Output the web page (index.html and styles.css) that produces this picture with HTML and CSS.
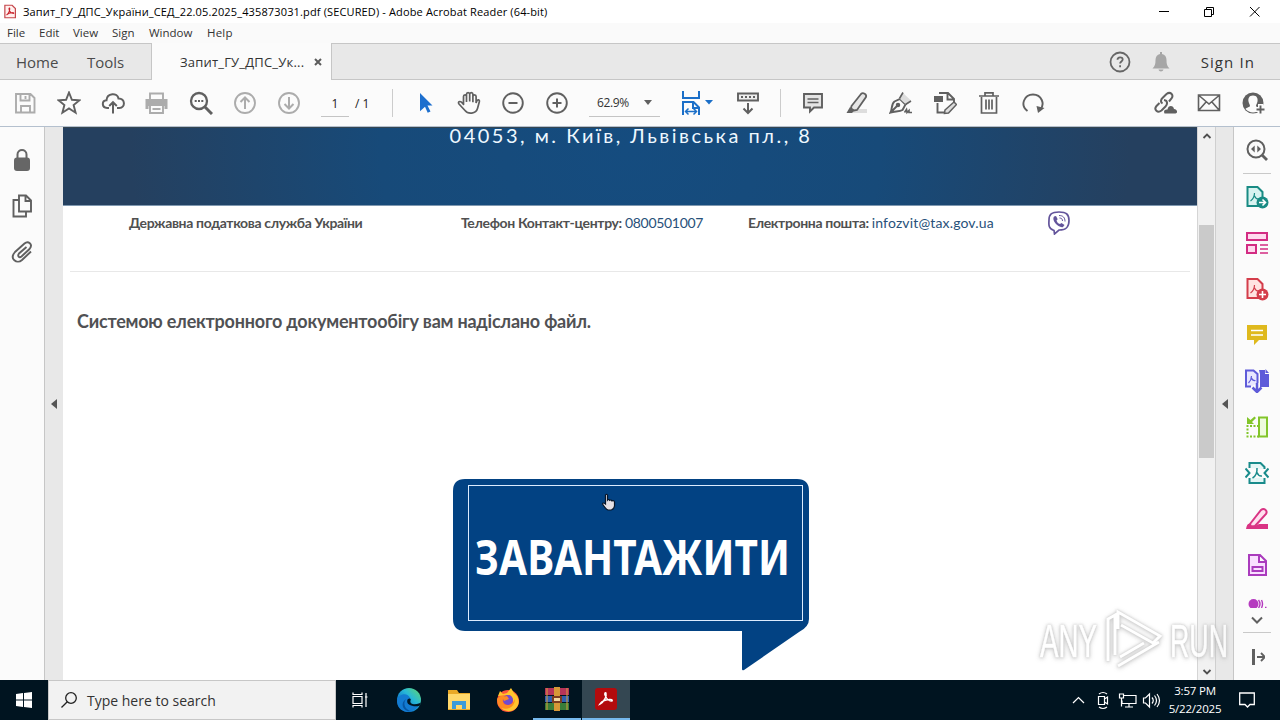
FILE: index.html
```html
<!DOCTYPE html>
<html lang="uk">
  <head>
    <meta charset="UTF-8" />
    <meta name="viewport" content="width=device-width, initial-scale=1.0" />
    <title>Adobe Acrobat Reader (64-bit)</title>
    <link rel="stylesheet" href="styles.css">
  </head>
  <body>
    <!-- Title bar -->
    <header class="title-bar">
      <svg class="app-icon" viewBox="0 0 14 16"><path d="M1 .7h8.500l3.800 3.800v10.800H1z" fill="#fff0ee" stroke="#c5464b" stroke-width="1.400"/><path d="M3 12c2-1 4-5 3.700-7.500-.2-1.300-1.300-.4-.7 1.200C6.700 8 9 10 11 10.200c1 0 .5-1.100-1-1-2.400.1-5.400.9-7 2.800z" fill="none" stroke="#c8202a" stroke-width="1.200"/></svg>
      <span class="title-text">Запит_ГУ_ДПС_України_СЕД_22.05.2025_435873031.pdf (SECURED) - Adobe Acrobat Reader (64-bit)</span>
      <svg class="window-buttons" viewBox="0 0 112 22" fill="none" stroke="#000"><path d="M7 10.500h10M52.500 8.500h7v7h-7zM54.500 8.500v-2h7v7h-2M98 6l9.500 9.500M107.500 6L98 15.500"/></svg>
    </header>

    <nav class="menu-bar">
      <span class="m-file">File</span><span class="m-edit">Edit</span><span class="m-view">View</span><span class="m-sign">Sign</span><span class="m-window">Window</span><span class="m-help">Help</span>
    </nav>

    <!-- Tabs -->
    <div class="tab-bar">
      <span class="home">Home</span>
      <span class="tools">Tools</span>
      <div class="doc-tab">
        <span class="doc-name">Запит_ГУ_ДПС_Ук...</span>
        <svg width="8" height="8" viewBox="0 0 8 8" stroke="#5c5c5c" stroke-width="2"><path d="M1 1l6 6M7 1L1 7"/></svg>
      </div>
      <div class="account">
        <svg width="22" height="22" viewBox="0 0 22 22" fill="none" stroke="#666" stroke-width="1.800"><circle cx="11" cy="11" r="9.500"/><path d="M8.500 8.800c0-3.300 5.200-3.300 5.200-.3 0 1.900-2.600 2-2.600 4M11.100 14.300v2"/></svg>
        <svg width="18" height="22" viewBox="0 0 18 22" fill="#a6a6a6"><path d="M8 1h2v2c3 .6 4.500 3 4.500 6 0 4 .5 6 3 8.500H.5C3 15 3.500 13 3.500 9c0-3 1.500-5.400 4.500-6zM6.500 18.500h5c-.5 2.500-4.500 2.500-5 0z"/></svg>
        <span class="sign-in">Sign In</span>
      </div>
    </div>

    <!-- Toolbar -->
    <div class="toolbar">
      <svg class="icon dim" viewBox="0 0 24 24"><path d="M3 3h14.500L21.500 7v14.500H3zM7.500 3v6.500h9V3M12.500 5v3M8 21.500v-6.500h9v6.500"/></svg>
      <svg class="icon" viewBox="0 0 24 24"><path d="M12 1.500l2.900 7.300 7.600.5-5.900 4.800 2 7.600L12 17.500l-6.600 4.200 2-7.600-5.900-4.800 7.600-.5z"/></svg>
      <svg class="icon" viewBox="0 0 24 24"><path d="M8 17H6.200C.5 16.500.5 9.700 5.500 9.300 6 1.500 16.500 1.500 17.500 7.500c6.800-.2 7.300 9 .8 9.500H16M12 22.500V11.500M8.200 15l3.800-3.800 3.800 3.800" stroke-width="2"/></svg>
      <svg class="icon dim" viewBox="0 0 24 24"><path d="M5 8V2.500h13V8"/><path d="M.5 8h22v10h-3v-3h-16v3h-3z" fill="#acacac" stroke="none"/><path d="M5 15v7h13v-7M7.500 18h8"/></svg>
      <svg class="icon" viewBox="0 0 24 24"><circle cx="10" cy="10" r="8" stroke-width="2.300"/><path d="M16 16l7 7" stroke-width="3"/><path d="M5.700 9h2v2h-2zM9 9h2v2H9zM12.300 9h2v2h-2z" fill="#606060" stroke="none"/></svg>
      <svg class="icon dim" viewBox="0 0 24 24"><circle cx="12" cy="12" r="10"/><path d="M12 18V6.500M7.500 11L12 6.500l4.500 4.500" stroke-width="2"/></svg>
      <svg class="icon dim" viewBox="0 0 24 24"><circle cx="12" cy="12" r="10"/><path d="M12 6v11.500M7.500 13l4.500 4.500 4.500-4.500" stroke-width="2"/></svg>
      <div class="page-no"><span class="current">1</span><span>/ 1</span></div>
      <i class="divider first"></i>
      <svg class="icon" viewBox="0 0 24 24"><path d="M7 2l12.500 12.500h-5l3 6-2.800 1.300-2.700-6-5 4.500z" fill="#1d6fce" stroke="none"/></svg>
      <svg class="icon" viewBox="0 0 24 24"><path d="M6.500 14V6c0-2.200 3-2.200 3 0v5.500V3.700c0-2.200 3.200-2.200 3.200 0v7.300V3.700c0-2.200 3.200-2.200 3.200 0v8V6c0-2.200 3.200-2.200 3.200 0v6.500l.7-2c.9-2 3-1.200 2.600.6L20.500 18c-1.500 5.500-9.500 6-12.500 2L2 13.500c-1.500-2 .7-3.300 2.500-1.800l2.500 2.600" transform="translate(0 -.5)" stroke-width="1.700"/></svg>
      <svg class="icon" viewBox="0 0 24 24"><circle cx="12" cy="12" r="9.800"/><path d="M7.500 12h9" stroke-width="2"/></svg>
      <svg class="icon" viewBox="0 0 24 24"><circle cx="12" cy="12" r="9.800"/><path d="M7.500 12h9M12 7.500v9" stroke-width="2"/></svg>
      <div class="zoom-level"><span>62.9%</span><i class="caret"></i></div>
      <svg class="fit-icon" viewBox="0 0 32 26" fill="none" stroke="#1b6fc8" stroke-width="2"><path d="M2 1v7h16V1M2 25V12h10.500l5.500 5.500V25M12 12v6h6"/><path d="M4.500 21.500h11M7.500 18.500l-3 3 3 3M12.500 18.500l3 3-3 3" stroke-width="1.500"/><path d="M24 10h8l-4 4.500z" fill="#1b6fc8" stroke="none"/></svg>
      <svg class="icon keyboard" viewBox="0 0 24 24"><path d="M2 2.500h20v7H2z" fill="#eee"/><path d="M5 6h2M9 6h2M13 6h2M17 6h2M12 12v10M7.500 17.500L12 22l4.500-4.500" stroke-width="2"/></svg>
      <i class="divider second"></i>
      <svg class="icon" viewBox="0 0 24 24"><path d="M3 3h18v13.500h-8l-4 4v-4H3z" fill="#e4e4e4"/><path d="M6.500 8h11M6.500 11.500h11" stroke-width="1.300"/></svg>
      <svg class="icon" viewBox="0 0 24 24"><path d="M9 18h13v4H7z" fill="#ddd" stroke="none"/><path d="M6.500 15L16 3c2-2 6 .2 5 3l-9 13-3 .5-3-2z" fill="#e5e5e5" stroke-width="1.800"/><path d="M5 16l4.500 3.500L7 22H1.500z" fill="#606060" stroke="none"/></svg>
      <svg class="icon" viewBox="0 0 24 24"><path d="M1.500 21.500C3.500 18 2 13 5.500 10.500L11 8l5.500 5.500-3 5.500c-3 2-8 1-12 2.500zM2 21l6-6"/><path d="M10.500 7.500l3.500-5.500 8 7.500-5 4" fill="#ddd" stroke="none"/><path d="M10.500 7.500L14 1.500M16.500 13.500L22 10M15.500 21.500l2-3 .5 3 2-2v2h3" stroke-width="1.600"/><circle cx="9" cy="14" r="1.300" fill="#606060"/></svg>
      <svg class="icon" viewBox="0 0 24 24"><path d="M6 2h9l6 6v3M14.500 2v6.500H21M4.500 12v9.500H11" stroke-width="1.900"/><path d="M1 5h9v6H1z" fill="#606060" stroke="none"/><path d="M12 19l9-8 2.500 2.500-8 8.500-4 .5z" fill="#ddd" stroke-width="1.500"/></svg>
      <svg class="icon" viewBox="0 0 24 24"><path d="M2 5h20M8 4.500V1.800h8v2.700M4.500 6v16h15V6M9 8.500v10M12 8.500v10M15 8.500v10" stroke-width="1.700"/></svg>
      <svg class="icon" viewBox="0 0 24 24"><path d="M6.500 20C-1.500 14 3.500 3.500 12 3.500c8.500 0 12.500 9.500 7 15.500"/><path d="M15.500 15l8 2-6.500 5z" fill="#606060" stroke="none"/></svg>
      <div class="share-tools">
        <svg class="icon" viewBox="0 0 24 24"><path d="M9.500 12.500c-2.500-1.500-1.500-4 0-5.500l4-4c4-3 7.500 1 5 4.500l-2.500 3M11 9c4 .5 3.500 4.500 1.500 6.500l-4 4c-4 3-8-1-5-4.500l3-3" stroke-width="2"/><path d="M11.500 22.500c-1.500-3 1-4.500 3-4 .5-4.500 6-4.500 6.500-.5 3.500 0 4 4.500 1.500 4.500z" fill="#606060" stroke="none"/></svg>
        <svg class="icon" viewBox="0 0 24 24"><path d="M1.500 4h21v15.500h-21zM2 4.500l10 8.500 10-8.500M2 19l7.500-8.500M22 19l-7.500-8.500" stroke-width="1.600"/></svg>
        <svg class="icon" viewBox="0 0 24 24"><circle cx="12" cy="12" r="10.500" fill="#606060" stroke="none"/><path d="M12 4.500c-4 0-5 3-4.500 6 .3 2 1.500 3 1.500 4.500 0 1-3.500 1.500-4.500 3 4 4.500 11 4.500 15 0-1-1.500-4.500-2-4.500-3 0-1.500 1.200-2.500 1.500-4.500.5-3-.5-6-4.500-6z" fill="#fbfbfb" stroke="none"/><path d="M14.500 18.500h9.500M19.500 13v11" stroke="#fbfbfb" stroke-width="5"/><path d="M15.500 18.500h8M19.500 14.500v8"/></svg>
      </div>
    </div>

    <main class="workspace">
      <aside class="left-rail">
        <svg width="18" height="24" viewBox="0 0 18 24"><path d="M4.500 11V6.500c0-6 9-6 9 0V11" fill="none" stroke="#666" stroke-width="2"/><rect x="1" y="9.500" width="16" height="13.500" rx="3" fill="#666"/></svg>
        <svg width="20" height="24" viewBox="0 0 20 24" fill="none" stroke="#606060" stroke-width="1.900"><path d="M7 1.500h7l5 5v11H7zM13.500 1.500V7H19M7 6H1.500v16.500h12.500v-5"/></svg>
        <svg width="22" height="24" viewBox="0 0 22 24" fill="none" stroke="#606060" stroke-width="1.900"><path d="M15.500 7L8 13.500c-2 3 .5 4.500 2.500 3l8-7.500c4-5-1.500-8.500-5-5.500L4 12c-6 7 2 12.500 7 8l9-8.500"/></svg>
      </aside>
      <div class="gutter"><i class="arrow-left"></i></div>

      <article class="page">
        <div class="banner"><span class="address">04053, м. Київ, Львівська пл., 8</span></div>
        <div class="contacts">
          <span class="c-org">Державна податкова служба України</span>
          <span class="c-phone">Телефон Контакт-центру: <a>0800501007</a></span>
          <span class="c-mail">Електронна пошта: <a class="mail">infozvit@tax.gov.ua</a></span>
          <svg width="22" height="24" viewBox="0 0 22 24" fill="none" stroke="#63549b"><path d="M6 19.500C-.5 17.500 1 12 1 9c0-5.500 2.500-8 10-8s10 2.500 10 8.500-2 9.500-10 9.500l-4.500 4z" stroke-width="1.700"/><path d="M6 5.500c-3 4 5 12 9 10.500l1.500-2-3-2-1.500 1c-2-.5-3-2-3.500-3.500l1.200-1.200L8 5z" fill="#63549b" stroke="none"/><path d="M11 4.500c4 0 6 2 6 6M11.500 7c2 0 3 1 3 3"/></svg>
        </div>
        <p class="message">Системою електронного документообігу вам надіслано файл.</p>
        <svg class="download" viewBox="0 0 356 192">
          <path d="M12 0h332q12 0 12 12v128q0 8-10 13l-55 38q-2 1-2-1v-38H12q-12 0-12-12V12Q0 0 12 0z" fill="#024283"/>
          <rect x="15.500" y="6.500" width="334" height="135" fill="none" stroke="#dcecff"/>
          <text x="22" y="95.500" textLength="315" lengthAdjust="spacingAndGlyphs">ЗАВАНТАЖИТИ</text>
        </svg>
        <svg class="cursor" viewBox="0 0 16 18"><path d="M4.500 11V2q1-1.500 2 0v5q1-1.200 2.200.4 1.200-1 2.200.5 2-.8 2.600 1V13q-.5 3.500-3.500 4H7q-2-.5-5.500-6 .5-2 3 0z" fill="#e5e0e5" stroke="#071426" stroke-width="1.200"/></svg>
      </article>

      <div class="scrollbar">
        <svg width="10" height="8" viewBox="0 0 10 8"><path d="M1.500 6L5 2.500 8.500 6"/></svg>
        <i class="thumb"></i>
        <svg class="down" width="10" height="8" viewBox="0 0 10 8"><path d="M1.500 2L5 5.500 8.500 2"/></svg>
      </div>
      <div class="gutter right"><i class="arrow-left"></i></div>

      <aside class="right-rail">
        <svg viewBox="0 0 24 24" fill="none" stroke="#606060"><circle cx="11" cy="11" r="8.500" stroke-width="2"/><path d="M17 17l5 5" stroke-width="2.800"/><path d="M9.700 7.500v7L6 11zM12.300 7.500v7L16 11z" fill="#606060" stroke="none"/></svg>
        <i class="rule"></i>
        <svg viewBox="0 0 24 24" fill="#d8f3f0" stroke="#198b84" stroke-width="2"><path d="M2.500 2h10l5 5v14h-15z"/><path d="M5.500 16q4-3 4-8M9.500 11q2 4 5 3" stroke-width="1.200"/><circle cx="17.500" cy="17.500" r="6" fill="#198b84" stroke="none"/><path d="M14 17.500h6M17.500 14.500l3 3-3 3" fill="none" stroke="#fff" stroke-width="1.600"/></svg>
        <svg viewBox="0 0 24 24" fill="#ffd9ee" stroke="#d32c83" stroke-width="2"><path d="M2 2h20v7H2zM2 14h9v8H2z"/><path d="M15 14h8M15 18h8M15 22h8" stroke-width="1.500"/></svg>
        <svg viewBox="0 0 24 24" fill="#ffe3e1" stroke="#d43d4b" stroke-width="2"><path d="M2.500 2h10l5 5v14h-15z"/><path d="M5.500 16q4-3 4-8M9.500 11q2 4 5 3" stroke-width="1.200"/><circle cx="17.500" cy="17.500" r="6" fill="#d43d4b" stroke="none"/><path d="M14 17.500h7M17.500 14v7" stroke="#fff" stroke-width="1.600"/></svg>
        <svg viewBox="0 0 24 24"><path d="M2 2h20v15h-8l-5 5v-5H2z" fill="#dfb91d"/><path d="M6 7.500h12M6 12h12" stroke="#fff" stroke-width="1.700"/></svg>
        <svg viewBox="0 0 24 24" fill="#e8e7ff" stroke="#5e5bd9" stroke-width="2"><path d="M14 1h6v4h4v13h-9V5z" fill="#5e5bd9" stroke="none"/><path d="M20.500 0l3.500 4h-3.500z" fill="#5e5bd9" stroke="none"/><path d="M6 17.500H1V1.500h7.500L12.500 5v9"/><path d="M3.500 14q3-3 3-7M6.500 9q1 3 4 2.500" fill="none" stroke-width="1.200"/><path d="M12 14v8M7.500 18.500L12 23l4.500-4.500" fill="none" stroke-width="2.500"/></svg>
        <svg viewBox="0 0 24 24" fill="none" stroke="#82c52a" stroke-width="2"><path d="M14 2.500h8v19h-8z" fill="#eefbdd"/><path d="M14 11H2.500v10.500H14" stroke-dasharray="2 1.500"/><path d="M2 2v7h7L7 7l4-4-1.500-1.500-4 3.500z" fill="#82c52a" stroke="none"/></svg>
        <svg viewBox="0 0 24 24" fill="#e4f6f5" stroke="#198b8b" stroke-width="2"><path d="M4.500 7V2h11l4 4v2M4.500 17v5h15v-5" /><path d="M.5 7.500l4 4.500-4 4.500M23.500 7.500l-4 4.500 4 4.500" fill="none"/><path d="M7.500 17q5-3 4.500-10M12 11.500q1.500 4 5 3.500" fill="none" stroke-width="1.500"/></svg>
        <svg viewBox="0 0 24 24"><path d="M1 22q1-6 4-5l5 2 4-2h9v5z" fill="#d93484"/><path d="M5 17L16 3c3-2.500 7 .5 5 4l-11 12-4 .5z" fill="#ffe0ef" stroke="#d93484" stroke-width="2"/></svg>
        <svg viewBox="0 0 24 24" fill="#f9dfff" stroke="#aa3bbd" stroke-width="2"><path d="M4 2h11l6 6v14H4zM14 2v7h7M7.500 14h10v4h-10z"/></svg>
        <div class="partial"><svg viewBox="0 0 24 10"><circle cx="8.500" cy="5" r="5" fill="#b53abf"/><path d="M13.500 1q3 4 0 8M16.500 1q2 4 0 8M20 8.500h1.500" fill="none" stroke="#b53abf" stroke-width="1.400"/></svg></div>
        <svg class="chevron" viewBox="0 0 12 8"><path d="M1 1.500l5 5 5-5" fill="none" stroke="#606060" stroke-width="2"/></svg>
        <i class="rule low"></i>
        <svg class="collapse" viewBox="0 0 16 16"><path d="M4.500 0v16" stroke="#606060" stroke-width="3"/><path d="M8 8h8M12 4l4 4-4 4" fill="none" stroke="#606060" stroke-width="1.900"/></svg>
      </aside>
    </main>

    <!-- Watermark -->
    <svg class="watermark" viewBox="0 0 200 66">
      <g class="mark-text"><text x="4" y="50" textLength="57" lengthAdjust="spacingAndGlyphs">ANY</text><text x="134" y="50" textLength="58" lengthAdjust="spacingAndGlyphs">RUN</text></g>
      <path d="M72 54V12l7-4v40M82 22V5l42 24-7 7-32-18M82 59l41-24M84 50l24-14" />
    </svg>

    <!-- Windows taskbar -->
    <footer class="taskbar">
      <div class="start"><svg width="16" height="16" viewBox="0 0 16 16" fill="#fff"><path d="M0 2l7-1v6.500H0zM8 .9L16 0v7.500H8zM0 8.500h7V15l-7-1zM8 8.500h8V16l-8-1z"/></svg></div>
      <div class="search">
        <svg width="18" height="18" viewBox="0 0 18 18" fill="none" stroke="#222" stroke-width="1.300"><circle cx="11" cy="7" r="5.300"/><path d="M7.300 10.700L1.500 16.500"/></svg>
        <span>Type here to search</span>
      </div>
      <div class="apps">
        <div class="app"><svg width="18" height="18" viewBox="0 0 18 18" fill="none" stroke="#fff" stroke-width="1.200"><path d="M2 5.500h9v7H2zM2 1.500v2h9v-2M2 16.500v-2h9v2M15 2v14M14 6h2.500"/></svg></div>
        <div class="app"><svg width="26" height="26" viewBox="0 0 26 26"><defs><linearGradient id="edge" x1="0" y1="1" x2="1" y2="0"><stop offset=".2" stop-color="#0869c4"/><stop offset=".6" stop-color="#28b9d8"/><stop offset="1" stop-color="#65d867"/></linearGradient></defs><circle cx="13" cy="13" r="12" fill="url(#edge)"/><path d="M1 14c1-8 11-9 13-3 1 3-2 4 1 6 3 1 6 .5 9-1-2 6-8 9-13 9C4 24 1 19 1 14z" fill="#137bd1"/><path d="M10 12c-4 5 0 12 6 12-8 2-13-7-6-12z" fill="#0757a4"/><path d="M11.500 12.500c2-2 4-1 3 1-1 3 3 5 8.500 3l2-1-1.500 3.500c-7 1-14-1-12-6.500z" fill="#001722"/></svg></div>
        <div class="app"><svg width="24" height="22" viewBox="0 0 24 22"><path d="M1 1h9l2 3h11v17H1z" fill="#e9a927"/><path d="M1 5h22v15H1z" fill="#ffd86b"/><path d="M5 20v-8h14v8h-4v-4H9v4z" fill="#3b9bd9"/></svg></div>
        <div class="app"><svg width="26" height="26" viewBox="0 0 26 26"><circle cx="13" cy="14" r="11" fill="#ff5539"/><path d="M3 9l2-5 3 3 4-1 4-5 3 5c5 3 6 10 3 14-5 7-14 4-17 0 12 2 17-5 10-12z" fill="#ffc52d"/><path d="M2 12c2-3 5-4 9-3l-3 3c-2 8 9 8 12 0 0 10-12 13-17 6z" fill="#ff8a22"/><circle cx="13" cy="13" r="5" fill="#704bd1"/><path d="M7 10l5-1 2 3-5 2z" fill="#ff8a22"/></svg></div>
        <div class="app open"><svg width="26" height="24" viewBox="0 0 26 24"><path fill="#b73459" d="M1 1h24v7H1z"/><path fill="#315faf" d="M1 9h24v6H1z"/><path fill="#397c38" d="M1 16h24v7H1z"/><path fill="#d69837" d="M10 0h6v24h-6z"/><path fill="#7b3c21" d="M8 9h10v7H8z"/><path d="M10 14v-3h6v3z" fill="#f3d69e"/><path d="M3 1v22M23 1v22" stroke="#d8a03f" stroke-width="1"/></svg></div>
        <div class="app open active"><svg width="22" height="22" viewBox="0 0 22 22"><rect width="22" height="22" rx="3" fill="#b30b0d"/><path d="M5 16c4-2 7-8 6-11-1-1-2 1-.5 3 1 3 4 5 6.500 5 1-1-1-2-3-1.500-3 .2-7 1.500-9 4.500z" fill="none" stroke="#fff" stroke-width="1.400"/></svg></div>
      </div>
      <div class="tray">
        <svg class="tray-icons" viewBox="0 0 90 20" fill="none" stroke="#fff" stroke-width="1.200"><path d="M1 13l5.500-5.500L12 13M26.500 6.500h6v8h-6zM32.500 9l3-2v7l-3-2M27 4q4-3 8 0M27 17q4 3 8 0M52 5.500h12v8H50v-3M47.500 4h4v4h-4zM49.500 8v8.500M57 14v3M53 17h8M71.500 8h2l4-4v13l-4-4h-2zM80 7.500q2.500 3 0 6M82.500 5.500q4 5 0 10M85 4q5 6.500 0 13"/></svg>
        <div class="clock"><span class="time">3:57 PM</span><span class="date">5/22/2025</span></div>
        <svg width="16" height="16" viewBox="0 0 16 16" fill="none" stroke="#fff" stroke-width="1.300"><path d="M.7 1h14.600v11.500H11L8.500 15 6 12.500H.7z"/></svg>
      </div>
    </footer>
  </body>
</html>
```
FILE: styles.css
```css
:root {
  --chrome: #fbfbfb;
  --tab-gray: #e8e8e8;
  --line: #c6c6c6;
  --icon: #606060;
  --page-blue: #024283;
  --taskbar: #001420;
}

* {
  box-sizing: border-box;
}

body {
  margin: 0;
  width: 1280px;
  height: 720px;
  overflow: hidden;
  position: relative;
  font-family: "Open Sans", "Noto Sans", sans-serif;
  color: #333;
  background: #fff;
  white-space: nowrap;
}

svg {
  display: block;
  flex: none;
}

/* --- Title and menu --- */
.title-bar {
  height: 23px;
  display: flex;
  align-items: center;
  padding-left: 4px;
  font-size: 11px;
  color: #000;
}

.app-icon {
  width: 12px;
  height: 15px;
}

.title-text {
  margin-left: 7px;
  letter-spacing: 0.14px;
}

.window-buttons {
  width: 112px;
  height: 22px;
  margin-left: auto;
  margin-right: 16px;
}

.menu-bar {
  height: 20px;
  display: flex;
  align-items: center;
  padding: 0 0 2px 7px;
  font-size: 11.5px;
  background: #fafafa;
}

.menu-bar .m-file { width: 32px; }
.menu-bar .m-edit { width: 34px; }
.menu-bar .m-view { width: 39px; }
.menu-bar .m-sign { width: 37px; }
.menu-bar .m-window { width: 58px; }
.menu-bar .m-help { letter-spacing: 0.2px; }

/* --- Tabs --- */
.tab-bar {
  height: 37px;
  display: flex;
  align-items: center;
  background: var(--tab-gray);
  border-top: 1px solid var(--line);
  border-bottom: 1px solid var(--line);
  font-size: 15px;
  color: #4b4b4b;
}

.home {
  width: 71px;
  margin-left: 16px;
}

.tools {
  width: 64px;
}

.doc-tab {
  width: 181px;
  height: 37px;
  display: flex;
  align-items: center;
  background: var(--chrome);
  border-left: 1px solid var(--line);
  border-right: 1px solid var(--line);
  padding-left: 28px;
  font-size: 13px;
  color: #333;
}

.doc-name {
  width: 134px;
  letter-spacing: 0.2px;
}

.account {
  display: flex;
  align-items: center;
  margin-left: auto;
  padding-right: 25px;
}

.account svg + svg {
  margin-left: 21px;
}

.sign-in {
  margin-left: 31px;
  letter-spacing: 1.1px;
  color: #333;
}

/* --- Toolbar --- */
.toolbar {
  height: 47px;
  display: flex;
  align-items: center;
  gap: 20px;
  padding-left: 13px;
  background: var(--chrome);
  border-bottom: 1px solid #b4c0ce;
}

.icon {
  width: 24px;
  height: 24px;
  fill: none;
  stroke: var(--icon);
  stroke-width: 1.9;
}

.dim {
  stroke: #acacac;
}

.page-no {
  display: flex;
  align-items: center;
  width: 51px;
  font-size: 12px;
  color: #222;
}

.current {
  width: 28px;
  height: 27px;
  line-height: 27px;
  text-align: center;
  border-bottom: 1px solid #c4c4c4;
  margin-right: 6px;
}

.divider {
  width: 1px;
  height: 28px;
  background: #ccc;
}

.zoom-level {
  display: flex;
  align-items: center;
  justify-content: space-between;
  width: 71px;
  height: 27px;
  padding: 0 8px;
  border-bottom: 1px solid #c4c4c4;
  font-size: 12px;
  letter-spacing: -0.4px;
}

.caret {
  border: 4px solid transparent;
  border-top: 5px solid #606060;
  border-bottom: 0;
}

.fit-icon {
  width: 32px;
  height: 26px;
  margin-left: 1px;
}

.keyboard {
  margin-left: 3px;
}

.share-tools {
  display: flex;
  gap: 20px;
  margin-left: auto;
  margin-right: 15px;
}

/* --- Workspace --- */
.workspace {
  display: flex;
  height: 553px;
}

.left-rail {
  width: 45px;
  display: flex;
  flex-direction: column;
  align-items: center;
  gap: 22px;
  padding-top: 21px;
  background: var(--chrome);
  border-right: 1px solid var(--line);
}

.gutter {
  width: 18px;
  display: flex;
  align-items: center;
  justify-content: center;
  background: var(--tab-gray);
}

.gutter.right {
  width: 19px;
  border-left: 1px solid #cfcfcf;
  border-right: 1px solid var(--line);
}

.arrow-left {
  border: 5px solid transparent;
  border-right: 6px solid #555;
  border-left: 0;
}

.page {
  width: 1134px;
  position: relative;
  font-family: Lato, "Open Sans", sans-serif;
  background: #fff;
}

.banner {
  height: 79px;
  text-align: center;
  background: radial-gradient(ellipse 500px 420px at 50% 30%, #154c7f 0, #174a79 50%, #25405f 100%);
  border-top: 1px solid #354652;
  border-bottom: 1px solid #7f98b0;
}

.address {
  display: block;
  padding-left: 2px;
  line-height: 14px;
  font-size: 20px;
  letter-spacing: 2.5px;
  color: #eef8ff;
}

.contacts {
  display: flex;
  align-items: center;
  height: 66px;
  margin: 0 7px;
  padding: 0 0 32px 59px;
  font-size: 14px;
  font-weight: bold;
  letter-spacing: -0.35px;
  color: #505050;
  border-bottom: 1px solid #e8e8e8;
}

.contacts a {
  font-weight: normal;
  letter-spacing: -0.3px;
  color: #28517a;
}

.contacts .mail {
  letter-spacing: 0.15px;
}

.c-org { width: 332px; }
.c-phone { width: 287px; }
.c-mail { width: 300px; }

.message {
  margin: 37px 0 0 14px;
  line-height: 24px;
  font-size: 18px;
  font-weight: bold;
  letter-spacing: -0.22px;
  color: #505154;
}

.download {
  width: 356px;
  height: 192px;
  margin: 146px 0 0 390px;
}

.download text {
  font: bold 49px "Noto Sans", sans-serif;
  fill: #fff;
}

/* Pointer over the button */
.cursor {
  position: absolute;
  left: 538px;
  top: 366px;
  width: 16px;
  height: 18px;
}

/* --- Scrollbar --- */
.scrollbar {
  width: 18px;
  display: flex;
  flex-direction: column;
  align-items: center;
  padding: 5px 0 4px;
  background: #f1f1f1;
  border-left: 1px solid #d5d5d5;
}

.scrollbar svg {
  fill: none;
  stroke: #505050;
  stroke-width: 1.8;
}

.thumb {
  width: 15px;
  height: 233px;
  margin-top: 85px;
  background: #cacaca;
}

.scrollbar .down {
  margin-top: auto;
}

/* --- Tools on the right --- */
.right-rail {
  flex: 1;
  display: flex;
  flex-direction: column;
  align-items: center;
  padding-top: 11px;
  background: var(--chrome);
}

.right-rail > svg {
  width: 24px;
  height: 24px;
  margin-bottom: 22px;
}

.rule {
  width: 28px;
  height: 1px;
  margin: -11px 0 11px;
  background: #c9c9c9;
}

.partial {
  height: 9px;
  width: 24px;
  overflow: hidden;
}

.partial svg {
  width: 24px;
  height: 10px;
}

.right-rail .chevron {
  width: 12px;
  height: 8px;
  margin: 8px 0 8px;
}

.rule.low {
  margin: 0 0 16px;
}

.right-rail .collapse {
  width: 16px;
  height: 16px;
  margin: 0;
}

/* --- Watermark --- */
.watermark {
  position: absolute;
  left: 1036px;
  top: 607px;
  width: 200px;
  height: 66px;
  fill: none;
  stroke: #fff;
  stroke-width: 3;
  opacity: 0.8;
  filter: drop-shadow(0 0 1px #bbb) drop-shadow(0 1px 2px #bbb);
}

.mark-text {
  font: 46px "Liberation Sans", sans-serif;
  fill: #fff;
  stroke-width: 0.5;
}

/* --- Taskbar --- */
.taskbar {
  height: 40px;
  display: flex;
  background: var(--taskbar);
  color: #fff;
}

.start {
  width: 48px;
  display: flex;
  align-items: center;
  justify-content: center;
}

.search {
  width: 288px;
  display: flex;
  align-items: center;
  gap: 9px;
  padding-left: 11px;
  background: #f2f2f2;
  border: 1px solid #c7c7c7;
  color: #333;
  font-size: 14px;
}

.apps {
  display: flex;
}

.app {
  width: 48px;
  margin-right: 1.3px;
  display: flex;
  align-items: center;
  justify-content: center;
}

.open {
  border-bottom: 2px solid #76b9ed;
}

.active {
  background: #344752;
}

.tray {
  display: flex;
  align-items: center;
  margin-left: auto;
  padding-right: 25px;
}

.tray-icons {
  width: 90px;
  height: 20px;
}

.clock {
  display: flex;
  flex-direction: column;
  align-items: center;
  width: 62px;
  margin: 0 13px 0 2px;
  font-size: 11.5px;
  line-height: 18px;
  letter-spacing: -0.2px;
}
```
